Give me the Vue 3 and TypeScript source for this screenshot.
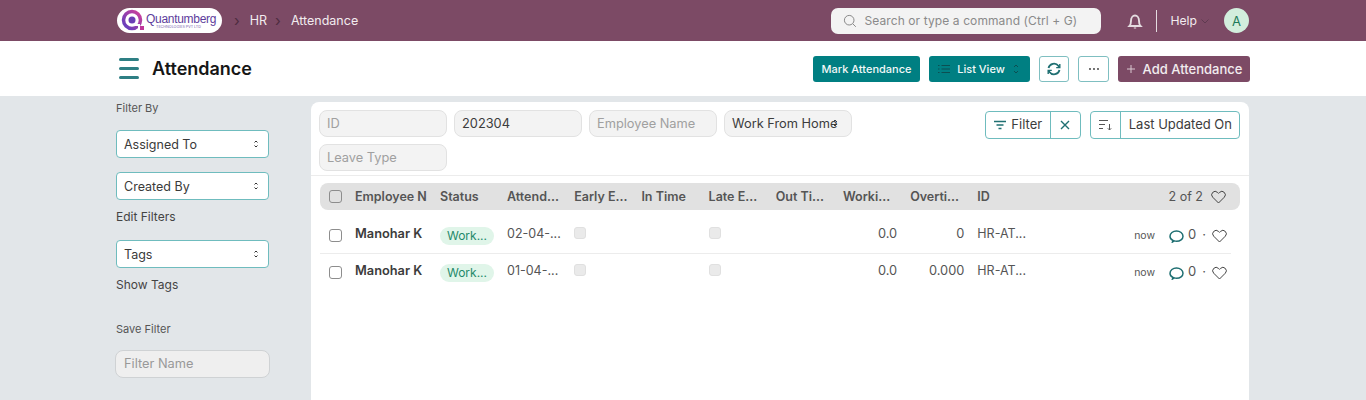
<script setup lang="ts">
interface Row {
  date: string
  overtime: string
}

const columns = ['Attend...', 'Early E...', 'In Time', 'Late E...', 'Out Ti...']
const rows: Row[] = [
  { date: '02-04-...', overtime: '0' },
  { date: '01-04-...', overtime: '0.000' },
]
</script>

<template>
  <div class="page">
    <header class="navbar">
      <div class="wrap nav-inner">
        <div class="logo">
          <svg width="27" height="25" viewBox="0 0 27 25" class="logo-mark">
            <defs>
              <linearGradient id="qring" x1="0" y1="1" x2="1" y2="0">
                <stop offset="0" stop-color="#5b3fc0" />
                <stop offset="1" stop-color="#d0409a" />
              </linearGradient>
            </defs>
            <circle cx="12" cy="12" r="8.500" fill="none" stroke="url(#qring)" stroke-width="3.500" />
            <circle cx="12" cy="12" r="3.500" fill="#6a3fb5" />
            <path d="M15 17h4v4" fill="none" stroke="#fff" stroke-width="2" />
            <rect x="20" y="18" width="4" height="4" fill="#c0359a" />
          </svg>
          <div class="logo-text">
            <span class="logo-name">Quantumberg</span>
            <span class="logo-sub">TECHNOLOGIES PVT LTD</span>
          </div>
        </div>
        <span class="crumb-sep first">›</span>
        <span class="crumb">HR</span>
        <span class="crumb-sep">›</span>
        <span class="crumb">Attendance</span>
        <div class="search">
          <svg width="14" height="14" viewBox="0 0 14 14" fill="none" stroke="#8a8a8a" stroke-width="1">
            <circle cx="6.200" cy="6.200" r="4.800" />
            <path d="M9.800 9.800l3 3" />
          </svg>
          <span>Search or type a command (Ctrl + G)</span>
        </div>
        <svg class="bell" width="16" height="16" viewBox="0 0 16 16" fill="none" stroke="#e4dce0" stroke-width="1.900">
          <path d="M2.500 13c1.200-1.200 1.500-2.700 1.500-5.200C4 4.800 5.800 2.500 8 2.500s4 2.300 4 5.300c0 2.500.3 4 1.500 5.200z" />
          <path d="M6.800 15h2.400" stroke-width="1" />
        </svg>
        <span class="nav-divider"></span>
        <span class="help">Help</span>
        <svg class="help-caret" width="10" height="10" viewBox="0 0 10 10" fill="none" stroke="#5f3a50" stroke-width="1">
          <path d="M1.500 3.500L5 7l3.500-3.500" />
        </svg>
        <span class="avatar">A</span>
      </div>
    </header>

    <section class="page-head">
      <div class="wrap head-inner">
        <span class="burger"><i></i><i></i><i></i></span>
        <h1>Attendance</h1>
        <div class="actions">
          <button class="btn teal small">Mark Attendance</button>
          <button class="btn teal list-view">
            <svg width="12" height="12" viewBox="0 0 12 12" fill="none" stroke="#0c4f52" stroke-width="1">
              <path d="M3.500 2.500H12M3.500 6H12M3.500 9.500H12M0 2.500h1.500M0 6h1.500M0 9.500h1.500" />
            </svg>
            <span>List View</span>
            <svg width="8" height="12" viewBox="0 0 8 12" fill="none" stroke="#0c4f52" stroke-width="1">
              <path d="M2 4l2-2 2 2M2 8l2 2 2-2" />
            </svg>
          </button>
          <button class="btn outline icon-btn">
            <svg width="14" height="14" viewBox="0 0 14 14" fill="none" stroke="#1f6f72" stroke-width="1.800">
              <path d="M1.500 6a5.600 5.600 0 0 1 10-2l1 1.500M12.500 8a5.600 5.600 0 0 1-10 2l-1-1.500" />
              <path d="M12.800 2v3.600H9.200M1.200 12V8.400h3.600" stroke-width="1.400" />
            </svg>
          </button>
          <button class="btn outline icon-btn dots">
            <svg width="12" height="4" viewBox="0 0 12 4" fill="#333">
              <circle cx="2" cy="2" r="0.900" /><circle cx="6" cy="2" r="0.900" /><circle cx="10" cy="2" r="0.900" />
            </svg>
          </button>
          <button class="btn plum">
            <svg width="10" height="10" viewBox="0 0 10 10" stroke="#d9c8d1" stroke-width="1">
              <path d="M5 1v8M1 5h8" />
            </svg>
            <span>Add Attendance</span>
          </button>
        </div>
      </div>
    </section>

    <div class="wrap body">
      <aside class="sidebar">
        <div class="side-label filter-by">Filter By</div>
        <div class="side-select">
          <span>Assigned To</span>
          <svg width="8" height="12" viewBox="0 0 8 12" fill="none" stroke="#333" stroke-width="1"><path d="M2.500 4.500L4 3l1.500 1.500M2.500 7.500L4 9l1.500-1.500" /></svg>
        </div>
        <div class="side-select">
          <span>Created By</span>
          <svg width="8" height="12" viewBox="0 0 8 12" fill="none" stroke="#333" stroke-width="1"><path d="M2.500 4.500L4 3l1.500 1.500M2.500 7.500L4 9l1.500-1.500" /></svg>
        </div>
        <div class="side-link">Edit Filters</div>
        <div class="side-select tags">
          <span>Tags</span>
          <svg width="8" height="12" viewBox="0 0 8 12" fill="none" stroke="#333" stroke-width="1"><path d="M2.500 4.500L4 3l1.500 1.500M2.500 7.500L4 9l1.500-1.500" /></svg>
        </div>
        <div class="side-link">Show Tags</div>
        <div class="side-label save">Save Filter</div>
        <div class="filter-name">Filter Name</div>
      </aside>

      <main class="card">
        <div class="filters">
          <div class="fields">
            <div class="field ph">ID</div>
            <div class="field">202304</div>
            <div class="field ph">Employee Name</div>
            <div class="field wfh">Work From Home
              <svg class="wfh-caret" width="6" height="10" viewBox="0 0 6 10" fill="none" stroke="#444" stroke-width="1"><path d="M1 4l2-2 2 2M1 6l2 2 2-2" /></svg>
            </div>
            <div class="field ph">Leave Type</div>
          </div>
          <div class="filter-btns">
            <div class="btn-group">
              <span class="seg filter-seg">
                <svg width="14" height="10" viewBox="0 0 14 10" stroke="#1f6f72" stroke-width="1.400"><path d="M1 1.500h12M3.500 5h7M5.500 8.500h3" /></svg>
                <span class="seg-text">Filter</span>
              </span>
              <span class="seg x-seg">
                <svg width="10" height="10" viewBox="0 0 10 10" stroke="#1f6f72" stroke-width="1.400"><path d="M1 1l8 8M9 1L1 9" /></svg>
              </span>
            </div>
            <div class="btn-group">
              <span class="seg sort-seg">
                <svg width="14" height="12" viewBox="0 0 14 12" fill="none" stroke="#555" stroke-width="1"><path d="M1 1.500h9M1 5.500h6M1 9.500h4M11.500 5v6M9.800 9.300l1.700 1.700 1.700-1.700" /></svg>
              </span>
              <span class="seg updated-seg"><span class="seg-text">Last Updated On</span></span>
            </div>
          </div>
        </div>

        <div class="list">
          <div class="list-head row-grid">
            <span class="check head-check"></span>
            <span class="col-name">Employee N</span>
            <span class="col-status">Status</span>
            <span v-for="c in columns" :key="c" class="col">{{ c }}</span>
            <span class="col">Worki...</span>
            <span class="col">Overti...</span>
            <span class="col-id">ID</span>
            <span class="head-end">
              <span>2 of 2</span>
              <svg class="heart" width="15" height="14" viewBox="0 0 15 14" fill="none" stroke="#444" stroke-width="1"><path d="M7.500 13L1.700 7.200a3.400 3.400 0 0 1 0-4.800 3.400 3.400 0 0 1 4.800 0l1 1 1-1a3.400 3.400 0 0 1 4.800 0 3.400 3.400 0 0 1 0 4.800z" /></svg>
            </span>
          </div>

          <div v-for="(r, i) in rows" :key="r.date" class="list-row row-grid" :class="{ last: i === rows.length - 1 }">
            <span class="check"></span>
            <span class="col-name name">Manohar K</span>
            <span class="col-status"><span class="pill">Work...</span></span>
            <span class="col plain">{{ r.date }}</span>
            <span class="col"><span class="mini-check"></span></span>
            <span class="col"></span>
            <span class="col"><span class="mini-check"></span></span>
            <span class="col"></span>
            <span class="col num">0.0</span>
            <span class="col num">{{ r.overtime }}</span>
            <span class="col-id plain">HR-AT...</span>
            <span class="row-end">
              <span class="when">now</span>
              <svg class="bubble" width="15" height="14" viewBox="0 0 15 14" fill="none" stroke="#1f6f72" stroke-width="1.500"><path d="M4 11.500C2 10.600 1 9 1 7.200 1 4.300 3.900 2 7.500 2S14 4.300 14 7.200s-2.900 5-6.500 5c-.8 0-1.500-.1-2.200-.3L3.500 13z" /></svg>
              <span class="count">0</span>
              <span class="dot">·</span>
              <svg class="heart" width="15" height="14" viewBox="0 0 15 14" fill="none" stroke="#444" stroke-width="1"><path d="M7.500 13L1.700 7.200a3.400 3.400 0 0 1 0-4.800 3.400 3.400 0 0 1 4.800 0l1 1 1-1a3.400 3.400 0 0 1 4.800 0 3.400 3.400 0 0 1 0 4.800z" /></svg>
            </span>
          </div>
        </div>
      </main>
    </div>
  </div>
</template>

<style>
html, body {
  margin: 0;
  height: 400px;
  overflow: hidden;
  background: #e2e6e9;
}
</style>

<style scoped>
.page {
  font-family: Inter, "Noto Sans", sans-serif;
  color: #333;
  font-size: 13px;
}

.wrap {
  width: 1134px;
  margin: 0 auto;
}

.navbar {
  height: 41px;
  background: #7c4a65;
}

.nav-inner {
  height: 100%;
  display: flex;
  align-items: center;
  color: #f2ecef;
}

.logo {
  width: 105px;
  height: 25px;
  margin-left: 1px;
  background: #fff;
  border-radius: 13px;
  display: flex;
  align-items: center;
  flex-shrink: 0;
}

.logo-mark {
  margin-left: 3px;
  flex-shrink: 0;
}

.logo-text {
  display: flex;
  flex-direction: column;
  margin-left: -1px;
  margin-top: 1px;
  line-height: 1;
}

.logo-name {
  font-size: 12px;
  letter-spacing: -0.300px;
  color: #5d3c9c;
  font-family: "Liberation Sans", sans-serif;
}

.logo-sub {
  font-size: 3.700px;
  color: #7b5fb0;
  margin-left: 10px;
  white-space: nowrap;
}

.crumb-sep {
  color: #4e2c40;
  font-size: 15px;
  margin: 0 10px 0 8px;
}

.crumb-sep.first {
  margin-left: 12px;
}

.crumb {
  font-size: 12.500px;
}

.search {
  margin-left: auto;
  width: 270px;
  height: 26px;
  box-sizing: border-box;
  background: #f3f3f3;
  border-radius: 7px;
  display: flex;
  align-items: center;
  gap: 7px;
  padding-left: 12px;
  color: #8a8a8a;
  font-size: 12px;
  letter-spacing: 0.100px;
  white-space: nowrap;
}

.bell {
  margin-left: 26px;
}

.nav-divider {
  width: 1px;
  height: 22px;
  background: #e4dce0;
  margin: 0 13px 0 13px;
}

.help {
  font-size: 12.200px;
}

.help-caret {
  margin-left: 3px;
}

.avatar {
  width: 25px;
  height: 25px;
  margin-left: 14px;
  margin-right: 1px;
  border-radius: 50%;
  background: #d2eedd;
  color: #1f7a5a;
  font-size: 13px;
  display: flex;
  align-items: center;
  justify-content: center;
}

.page-head {
  height: 55px;
  background: #fff;
}

.head-inner {
  height: 100%;
  display: flex;
  align-items: center;
}

.burger {
  width: 20px;
  margin-left: 3px;
  display: flex;
  flex-direction: column;
  gap: 6px;
}

.burger i {
  display: block;
  height: 3px;
  border-radius: 2px;
  background: #2e7f84;
}

h1 {
  margin: 0 0 0 13px;
  font-size: 18px;
  font-weight: 600;
  color: #161616;
}

.actions {
  margin-left: auto;
  display: flex;
  gap: 9px;
  align-items: center;
}

.btn {
  height: 26px;
  box-sizing: border-box;
  border: 0;
  border-radius: 3px;
  font-family: inherit;
  display: flex;
  align-items: center;
  justify-content: center;
  padding: 0;
}

.teal {
  background: #007f82;
  color: #f2f8f8;
  font-size: 11px;
  font-weight: 500;
}

.small {
  width: 107px;
}

.list-view {
  width: 101px;
  gap: 7px;
  padding-right: 1px;
}

.outline {
  width: 30px;
  background: #fff;
  border: 1px solid #7fbfc1;
}

.outline.dots {
  width: 31px;
}

.plum {
  width: 132px;
  background: #7c4a65;
  color: #f2ecef;
  font-size: 13px;
  font-weight: 500;
  gap: 7px;
}

.body {
  display: flex;
  align-items: flex-start;
}

.sidebar {
  width: 154px;
  margin-right: 41px;
  flex-shrink: 0;
}

.side-label {
  font-size: 11px;
  color: #555;
}

.filter-by {
  margin-top: 6px;
  line-height: 13px;
}

.side-select {
  width: 153px;
  height: 28px;
  box-sizing: border-box;
  margin-top: 15px;
  padding: 0 8px 0 7px;
  background: #fff;
  border: 1px solid #6fbcbe;
  border-radius: 4px;
  display: flex;
  align-items: center;
  justify-content: space-between;
  font-size: 12.500px;
  color: #3a3a3a;
}

.side-select + .side-select {
  margin-top: 14px;
}

.side-link {
  font-size: 12px;
  color: #444;
  line-height: 15px;
  margin-top: 9px;
}

.side-select.tags {
  margin-top: 16px;
}

.save {
  margin-top: 31px;
  line-height: 13px;
  color: #555;
}

.filter-name {
  width: 155px;
  height: 28px;
  box-sizing: border-box;
  margin: 14px 0 0 -1px;
  padding: 0 0 1px 8px;
  background: #efefef;
  border: 1px solid #cfd2d4;
  border-radius: 8px;
  display: flex;
  align-items: center;
  color: #999;
  font-size: 12.800px;
}

.card {
  width: 938px;
  height: 298px;
  margin-top: 6px;
  box-sizing: border-box;
  background: #fff;
  border-radius: 8px 8px 0 0;
}

.filters {
  display: flex;
  justify-content: space-between;
  padding: 8px 9px 5px 8px;
  height: 74px;
  box-sizing: border-box;
  border-bottom: 1px solid #ececec;
}

.fields {
  width: 540px;
  display: flex;
  flex-wrap: wrap;
  gap: 7px 7px;
  align-content: flex-start;
}

.field {
  position: relative;
  width: 128px;
  height: 27px;
  box-sizing: border-box;
  padding: 0 0 1px 7px;
  background: #f3f3f3;
  border: 1px solid #e2e2e2;
  border-radius: 8px;
  display: flex;
  align-items: center;
  font-size: 12.800px;
  color: #3c3c3c;
  white-space: nowrap;
}

.field.ph {
  color: #a0a0a0;
}

.wfh-caret {
  position: absolute;
  right: 13px;
  top: 7px;
}

.filter-btns {
  display: flex;
  gap: 9px;
  align-items: flex-start;
  margin-top: 1px;
}

.btn-group {
  height: 28px;
  box-sizing: border-box;
  background: #fff;
  border: 1px solid #6fbcbe;
  border-radius: 4px;
  display: flex;
  font-size: 13px;
  color: #3c3c3c;
}

.seg {
  display: flex;
  align-items: center;
  justify-content: center;
  padding: 0 7px;
  gap: 4px;
  white-space: nowrap;
}

.updated-seg {
  padding-left: 8px;
}

.seg-text {
  margin-bottom: 3px;
}

.filter-seg {
  width: 64px;
  box-sizing: border-box;
  padding: 0;
}

.x-seg,
.sort-seg {
  border-left: 1px solid #6fbcbe;
  width: 30px;
  box-sizing: border-box;
  padding: 0;
}

.sort-seg {
  border-left: 0;
  border-right: 1px solid #6fbcbe;
}

.list {
  padding: 7px 9px 0;
}

.row-grid {
  display: grid;
  grid-template-columns: 26px 85px 67px repeat(7, 67.200px) 1fr auto;
  align-items: center;
  padding-left: 9px;
  white-space: nowrap;
}

.list-head {
  height: 27px;
  background: #e1e1e1;
  border-radius: 8px;
  font-size: 12.500px;
  font-weight: 600;
  color: #555;
  padding-right: 14px;
}

.check {
  width: 13px;
  height: 13px;
  box-sizing: border-box;
  background: #fff;
  border: 1px solid #8d8d8d;
  border-radius: 3px;
}

.head-check {
  background: transparent;
}

.list-row .check,
.list-row .pill,
.list-row .heart,
.list-row .bubble {
  margin-top: 4px;
}

.col-name,
.col-status,
.col,
.col-id {
  display: block;
}

.col-name {
  overflow: hidden;
  width: 73px;
}

.head-end {
  display: flex;
  align-items: center;
  gap: 8px;
  font-weight: 400;
  color: #555;
  font-size: 12.500px;
}

.list-row {
  height: 44px;
  box-sizing: border-box;
  padding-top: 4px;
  margin-right: 9px;
  border-bottom: 1px solid #ececec;
  font-size: 12.800px;
  color: #555;
}

.list-row.last {
  border-bottom: 0;
  height: 33px;
  padding-top: 0;
}

.plain {
  font-size: 12.500px;
}

.name {
  font-weight: 600;
  color: #3c3c3c;
}

.pill {
  display: inline-block;
  width: 54px;
  height: 18px;
  line-height: 18px;
  text-align: center;
  border-radius: 9px;
  background: #e0f5e9;
  color: #1f8a6a;
  font-size: 12px;
}

.mini-check {
  display: block;
  width: 12px;
  height: 12px;
  margin-bottom: 1px;
  background: #eaeaea;
  border: 1px solid #e0e0e0;
  box-sizing: border-box;
  border-radius: 3px;
}

.num {
  text-align: right;
  padding-right: 13px;
}

.row-end {
  display: flex;
  align-items: center;
  font-size: 13px;
  padding-right: 4px;
}

.when {
  font-size: 10.500px;
  margin-right: 14px;
  margin-top: 3px;
  color: #555;
}

.count {
  margin-left: 4px;
}

.dot {
  margin: 0 6px;
}
</style>
